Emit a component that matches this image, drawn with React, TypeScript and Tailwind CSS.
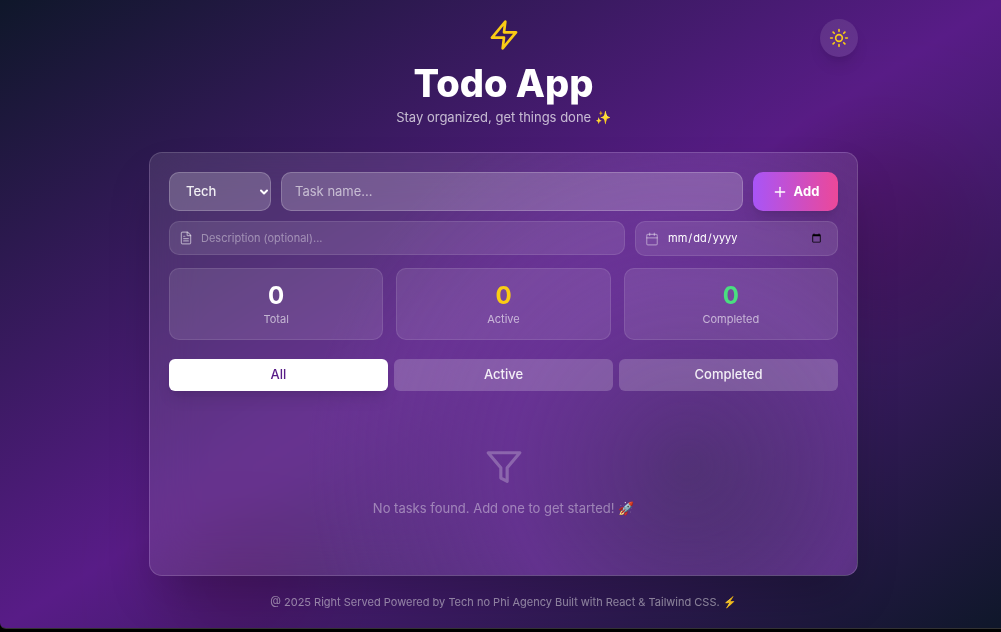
import React, { useState } from "react";
import { Calendar, ChevronDown, FileText, Plus, Sun } from "lucide-react";

type Filter = "All" | "Active" | "Completed";

const filters: Filter[] = ["All", "Active", "Completed"];

const stats = [
    { label: "Total", value: 0, color: "text-white" },
    { label: "Active", value: 0, color: "text-[#facc15]" },
    { label: "Completed", value: 0, color: "text-[#4ade80]" },
];

function ZapIcon({ className }: { className?: string }) {
    return (
        <svg
            viewBox="0 0 24 24"
            fill="none"
            stroke="currentColor"
            strokeWidth="2"
            strokeLinecap="round"
            strokeLinejoin="round"
            className={className}
            aria-hidden="true"
        >
            <polygon points="13 2 3 14 12 14 11 22 21 10 12 10 13 2" />
        </svg>
    );
}

function FunnelIcon({ className }: { className?: string }) {
    return (
        <svg
            viewBox="0 0 24 24"
            fill="none"
            stroke="currentColor"
            strokeWidth="2"
            strokeLinecap="round"
            strokeLinejoin="round"
            className={className}
            aria-hidden="true"
        >
            <polygon points="22 3 2 3 10 12.46 10 19 14 21 14 12.46 22 3" />
        </svg>
    );
}

// Soft colour blobs behind the card
function Background() {
    return (
        <div className="pointer-events-none absolute inset-0 overflow-hidden">
            <div className="absolute top-[130px] right-[20px] size-[200px] rounded-full bg-[#ec4899] opacity-30 mix-blend-multiply blur-2xl" />
            <div className="absolute -bottom-[20px] left-[170px] size-[140px] rounded-full bg-[#ec4899] opacity-30 mix-blend-multiply blur-2xl" />
        </div>
    );
}

function Header() {
    return (
        <header className="relative flex flex-col items-center">
            <ZapIcon className="size-8 text-[#facc15]" />
            <h1 className="mt-3 text-[38px] leading-10 font-extrabold text-white">Todo App</h1>
            <p className="mt-1 text-[13px] leading-5 text-white/70">
                Stay organized, get things done <span className="text-white">✨</span>
            </p>
            <button
                type="button"
                aria-label="Toggle theme"
                className="absolute top-0 right-0 flex size-[38px] items-center justify-center rounded-full bg-white/10 text-[#facc15] shadow-lg"
            >
                <Sun size={20} />
            </button>
        </header>
    );
}

function TaskForm() {
    const [category, setCategory] = useState("Tech");
    const [name, setName] = useState("");
    const [description, setDescription] = useState("");
    const [date, setDate] = useState("");

    return (
        <form className="flex flex-col gap-2.5" onSubmit={(e) => e.preventDefault()}>
            <div className="flex h-[39px] gap-2.5">
                <div className="relative w-[102px]">
                    <select
                        aria-label="Category"
                        value={category}
                        onChange={(e) => setCategory(e.target.value)}
                        className="size-full appearance-none rounded-[10px] border border-white/20 bg-white/20 px-4 text-[13px] font-medium text-white/90"
                    >
                        <option>Tech</option>
                        <option>Work</option>
                        <option>Personal</option>
                    </select>
                    <ChevronDown
                        size={12}
                        strokeWidth={4}
                        className="pointer-events-none absolute inset-y-0 right-px my-auto text-white"
                    />
                </div>
                <input
                    type="text"
                    aria-label="Task name"
                    placeholder="Task name..."
                    value={name}
                    onChange={(e) => setName(e.target.value)}
                    className="min-w-0 flex-1 rounded-[10px] border border-white/20 bg-white/20 px-[13px] text-[13px] text-white placeholder:text-white/60"
                />
                <button
                    type="submit"
                    className="flex w-[85px] items-center justify-center gap-1.5 rounded-[10px] bg-linear-to-r/srgb from-[#a855f7] to-[#ec4899] text-[13px] font-bold text-white shadow-lg"
                >
                    <Plus size={16} />
                    Add
                </button>
            </div>
            <div className="flex items-start gap-2.5">
                <label className="flex h-[34px] flex-1 items-center gap-2 rounded-[10px] border border-white/10 bg-white/10 px-[9px]">
                    <FileText size={14} className="text-white/50" />
                    <input
                        type="text"
                        aria-label="Description"
                        placeholder="Description (optional)..."
                        value={description}
                        onChange={(e) => setDescription(e.target.value)}
                        className="min-w-0 flex-1 bg-transparent text-[11px] text-white placeholder:text-white/40"
                    />
                </label>
                <label className="flex h-[35px] w-[203px] items-center gap-2 rounded-[10px] border border-white/10 bg-white/10 px-[9px]">
                    <Calendar size={14} className="text-white/40" />
                    <input
                        type="date"
                        aria-label="Due date"
                        value={date}
                        onChange={(e) => setDate(e.target.value)}
                        className="min-w-0 flex-1 bg-transparent pr-1 text-[11px] text-white"
                    />
                </label>
            </div>
        </form>
    );
}

export default function App() {
    const [filter, setFilter] = useState<Filter>("All");

    return (
        <div className="min-h-screen bg-black pb-[3px] font-[Inter,'Liberation_Sans',sans-serif]">
            <div className="relative min-h-[calc(100vh-3px)] overflow-hidden rounded-bl-md border-b border-[#333333] bg-linear-to-br/srgb from-[#0f172a] via-[#581c87] to-[#0f172a] pt-[19px] pr-2.5 pl-4">
                <Background />
                <div className="relative mx-auto max-w-[709px]">
                    <Header />
                    <main className="mt-[25px] rounded-[13px] border border-white/15 bg-white/10 bg-[radial-gradient(circle_at_76%_74%,#6b339933_10px,#6b3399bb_180px,transparent_380px)] px-[19px] pt-[19px] pb-[57px] shadow-2xl backdrop-blur-xl">
                        <TaskForm />
                        <div className="mt-3 grid grid-cols-3 gap-[13px]">
                            {stats.map((stat) => (
                                <div
                                    key={stat.label}
                                    className="rounded-[10px] border border-white/10 bg-white/10 py-3 text-center"
                                >
                                    <p className={`text-[24px] leading-[30px] font-bold ${stat.color}`}>{stat.value}</p>
                                    <p className="text-[11px] leading-4 text-white/60">{stat.label}</p>
                                </div>
                            ))}
                        </div>
                        <div className="mt-[19px] grid grid-cols-3 gap-1.5">
                            {filters.map((f) => (
                                <button
                                    key={f}
                                    type="button"
                                    onClick={() => setFilter(f)}
                                    className={`h-8 rounded-md text-[13px] font-medium ${
                                        filter === f ? "bg-white text-[#581c87] shadow-lg" : "bg-white/20 text-white/90"
                                    }`}
                                >
                                    {f}
                                </button>
                            ))}
                        </div>
                        <div className="mt-[57px] flex flex-col items-center gap-3">
                            <FunnelIcon className="size-[38px] text-white/25" />
                            <p className="text-[13px] leading-5 text-white/40">
                                No tasks found. Add one to get started! <span className="text-white">🚀</span>
                            </p>
                        </div>
                    </main>
                    <footer className="pt-4 text-center text-[11px] leading-5 text-white/50">
                        @ 2025 Right Served Powered by Tech no Phi Agency Built with React &amp; Tailwind CSS.{" "}
                        <span className="text-white">⚡</span>
                    </footer>
                </div>
            </div>
        </div>
    );
}
